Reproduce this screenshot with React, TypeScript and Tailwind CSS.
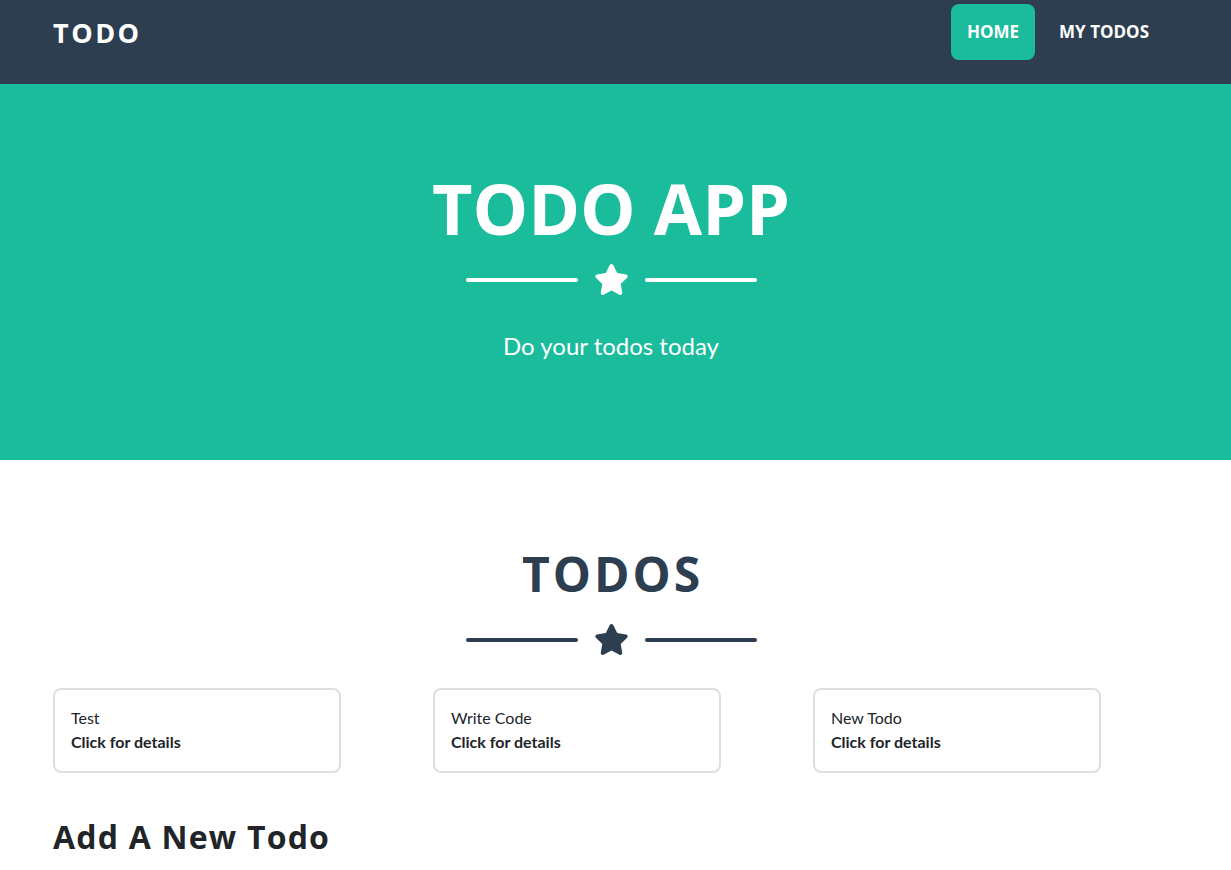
const StarIcon = ({ className }: { className?: string }) => (
    <svg viewBox="0 0 576 512" className={className} fill="currentColor">
        <path d="M259.3 17.8L194 150.2 47.9 171.5c-26.2 3.8-36.7 36.1-17.7 54.6l105.7 103-25 145.5c-4.5 26.3 23.2 46 46.4 33.7L288 439.6l130.7 68.7c23.2 12.2 50.9-7.4 46.4-33.7l-25-145.5 105.7-103c19-18.5 8.5-50.8-17.7-54.6L382 150.2 316.7 17.8c-11.7-23.6-45.6-23.9-57.4 0z" />
    </svg>
);

const Divider = ({ light }: { light?: boolean }) => {
    const line = light ? "bg-white" : "bg-[#2c3e50]";
    return (
        <div className={`flex items-center justify-center ${light ? "text-white" : "text-[#2c3e50]"}`}>
            <div className={`h-1 w-28 rounded-full ${line}`} />
            <StarIcon className="mx-4 h-[31px] w-[35px]" />
            <div className={`h-1 w-28 rounded-full ${line}`} />
        </div>
    );
};

const todos = [
    { id: 1, title: "Test" },
    { id: 2, title: "Write Code" },
    { id: 3, title: "New Todo" },
];

const heading = "font-['Open_Sans',sans-serif] font-bold";

export default function App() {
    return (
        <div className="min-h-screen bg-white font-['Lato',sans-serif] text-[#212529]">
            <nav className="bg-[#2c3e50] pb-5">
                <div className="flex h-16 w-[1222px] items-center justify-between pl-[53px] pr-[57px]">
                    <a href="#" className={`${heading} text-[27px] leading-none tracking-[2.5px] text-white`}>
                        TODO
                    </a>
                    <ul className={`${heading} flex items-center gap-2 text-[17px] text-white`}>
                        <li>
                            <a href="#" className="flex h-14 items-center rounded-lg bg-[#1abc9c] px-4">
                                HOME
                            </a>
                        </li>
                        <li>
                            <a href="#" className="flex h-14 items-center px-4">
                                MY TODOS
                            </a>
                        </li>
                    </ul>
                </div>
            </nav>

            <header className="h-[376px] bg-[#1abc9c] text-white">
                <div className="flex w-[1222px] flex-col items-center pt-[89px]">
                    <h1 className={`${heading} text-[70px] leading-none`}>TODO APP</h1>
                    <div className="mt-[21px]">
                        <Divider light />
                    </div>
                    <p className="mt-[39px] text-2xl leading-none">Do your todos today</p>
                </div>
            </header>

            <section className="w-[1222px] pb-10 pt-[90px]">
                <h2 className={`${heading} pl-[3px] text-center text-[48px] leading-none tracking-[3px] text-[#2c3e50]`}>
                    TODOS
                </h2>
                <div className="mt-[26px]">
                    <Divider />
                </div>
                <div className="ml-[53px] mt-[33px] grid w-[1140px] grid-cols-3">
                    {todos.map((todo) => (
                        <a
                            key={todo.id}
                            href="#"
                            className="block w-[288px] rounded-lg border-2 border-[#dfdfdf] px-4 pb-[17px] pt-4 text-base leading-6"
                        >
                            <p>{todo.title}</p>
                            <p className="font-bold">Click for details</p>
                        </a>
                    ))}
                </div>
                <h3 className={`${heading} ml-[53px] mt-[48px] text-[32px] leading-none tracking-[1.2px]`}>
                    Add A New Todo
                </h3>
            </section>
        </div>
    );
}
